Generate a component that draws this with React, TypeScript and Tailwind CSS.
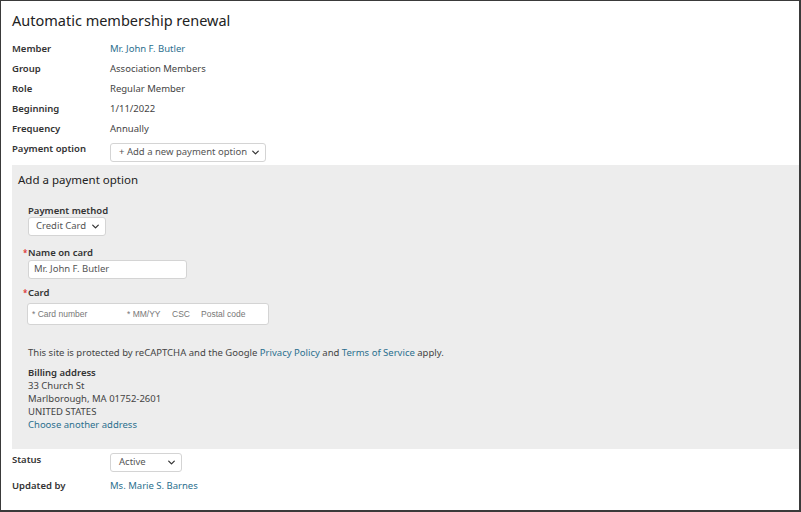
import React from "react";

const FONT = { fontFamily: '"Noto Sans", "Open Sans", sans-serif' };

function Chevron() {
    return (
        <svg viewBox="0 0 10 6" className="w-[7px] h-[5px] shrink-0" fill="none" stroke="#333" strokeWidth="1.8" strokeLinecap="round" strokeLinejoin="round">
            <path d="M1 1l4 4 4-4" />
        </svg>
    );
}

function FakeSelect({ label, className = "" }: { label: string; className?: string }) {
    return (
        <div className={`flex items-center justify-between whitespace-nowrap bg-white border border-[#d4d4d4] rounded-[3px] text-[9.5px] text-[#555] ${className}`}>
            <span>{label}</span>
            <Chevron />
        </div>
    );
}

function Row({ label, children, tall = false }: { label: string; children: React.ReactNode; tall?: boolean }) {
    return (
        <div className={`flex ${tall ? "" : "h-5 items-center"}`}>
            <div className="w-[98px] shrink-0 text-[9.5px] font-semibold text-[#333] leading-5">{label}</div>
            <div className="text-[9.5px] text-[#444]">{children}</div>
        </div>
    );
}

function Required({ children }: { children: React.ReactNode }) {
    return (
        <div className="relative text-[9.5px] font-semibold text-[#333] leading-[12px]">
            <span className="absolute -left-[5px] top-0 text-[#d33] text-[8px]">*</span>
            {children}
        </div>
    );
}

const link = "text-[#2b6f8e]";

export default function App() {
    return (
        <div style={FONT} className="w-[801px] h-[512px] bg-white border-t border-l border-r-2 border-b-2 border-[#3a3a3a] overflow-hidden">
            <div className="pl-[11px] pt-[7px]">
                <h1 className="text-[14.5px] text-[#222] leading-6 h-[31px]">Automatic membership renewal</h1>

                <Row label="Member"><span className={link}>Mr. John F. Butler</span></Row>
                <Row label="Group">Association Members</Row>
                <Row label="Role">Regular Member</Row>
                <Row label="Beginning">1/11/2022</Row>
                <Row label="Frequency">Annually</Row>
                <Row label="Payment option" tall>
                    <FakeSelect label="+ Add a new payment option" className="mt-[4px] w-[156px] h-[19px] pl-[8px] pr-[6px]" />
                </Row>
            </div>

            {/* new payment option form */}
            <div className="ml-[11px] mt-[3px] bg-[#ededed] h-[284px] pl-[6px] pt-[5px]">
                <h2 className="text-[11.5px] text-[#222] leading-5">Add a payment option</h2>
                <div className="pl-[10px] pt-[15px]">
                    <div className="text-[9.5px] font-semibold text-[#333] leading-[12px]">Payment method</div>
                    <FakeSelect label="Credit Card" className="w-[78px] h-[19px] pl-[7px] pr-[6px]" />

                    <div className="mt-[11px]">
                        <Required>Name on card</Required>
                        <div className="mt-[1px] w-[159px] h-[19px] bg-white border border-[#d4d4d4] rounded-[3px] pl-[5px] flex items-center text-[9.5px] text-[#555]">
                            Mr. John F. Butler
                        </div>
                    </div>

                    <div className="mt-[8px]">
                        <Required>Card</Required>
                        <div
                            style={{ fontFamily: '"Liberation Sans", Arial, sans-serif' }}
                            className="mt-[4px] -ml-[1px] w-[242px] h-[22px] bg-white border border-[#d4d4d4] rounded-[3px] flex items-center whitespace-nowrap text-[8.5px] text-[#777]"
                        >
                            <span className="pl-[4px] w-[99px]">* Card number</span>
                            <span className="w-[45px]">* MM/YY</span>
                            <span className="w-[29px]">CSC</span>
                            <span>Postal code</span>
                        </div>
                    </div>

                    <p className="mt-[21px] text-[9.5px] text-[#444] leading-[13px]">
                        This site is protected by reCAPTCHA and the Google <span className={link}>Privacy Policy</span> and{" "}
                        <span className={link}>Terms of Service</span> apply.
                    </p>

                    <div className="mt-[7px] text-[9.5px] text-[#444] leading-[13px]">
                        <div className="font-semibold text-[#333]">Billing address</div>
                        <div>33 Church St</div>
                        <div>Marlborough, MA 01752-2601</div>
                        <div>UNITED STATES</div>
                        <div className={link}>Choose another address</div>
                    </div>
                </div>
            </div>

            <div className="pl-[11px] pt-[1px]">
                <Row label="Status" tall>
                    <FakeSelect label="Active" className="mt-[3px] w-[72px] h-[19px] pl-[8px] pr-[6px]" />
                </Row>
                <div className="h-[4px]" />
                <Row label="Updated by"><span className={link}>Ms. Marie S. Barnes</span></Row>
            </div>
        </div>
    );
}
